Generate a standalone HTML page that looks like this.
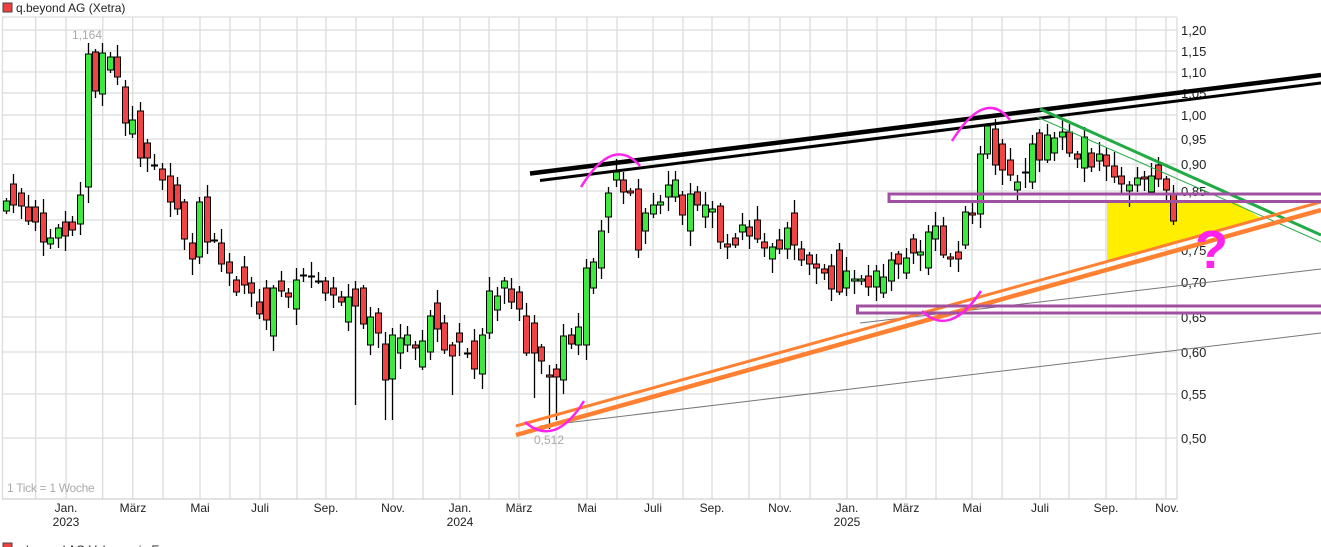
<!DOCTYPE html>
<html><head><meta charset="utf-8"><style>
html,body{margin:0;padding:0;background:#fff;width:1321px;height:547px;overflow:hidden}
svg{display:block}
text{font-family:"Liberation Sans",sans-serif}
</style></head><body>
<svg id="s" width="1321" height="547" viewBox="0 0 1321 547" xmlns="http://www.w3.org/2000/svg">
<rect x="0" y="0" width="1321" height="547" fill="#fff"/>
<g id="grid" stroke="#dcdcdc" stroke-width="1.3"></g>
<line x1="2" y1="499" x2="1177" y2="499" stroke="#d0d0d0" stroke-width="1.3"/>
<rect x="3" y="3" width="9" height="9" fill="#f04040" stroke="#444" stroke-width="1"/>
<text x="16" y="12" font-size="12" fill="#222">q.beyond AG (Xetra)</text>
<text x="72" y="39" font-size="12" fill="#aaa">1,164</text>
<text x="534" y="444" font-size="12" fill="#aaa">0,512</text>
<text x="7" y="492" font-size="12" fill="#aaa" letter-spacing="-0.3">1 Tick = 1 Woche</text>
<g id="labels" font-size="12" fill="#222" text-anchor="middle"></g>
<g id="ylab" font-size="13" fill="#222"></g>
<polygon points="1107,203 1237,203 1262,219 1107,262" fill="#ffee00"/>
<g id="candles"></g>
<line x1="540" y1="426" x2="1321" y2="333" stroke="#777" stroke-width="1"/>
<line x1="860" y1="323" x2="1321" y2="269" stroke="#777" stroke-width="1"/>
<line x1="530" y1="173.5" x2="1321" y2="75" stroke="#000" stroke-width="4.5"/>
<line x1="540" y1="180.5" x2="1321" y2="83" stroke="#000" stroke-width="3"/>
<line x1="1040" y1="109" x2="1321" y2="235" stroke="#22aa44" stroke-width="3"/>
<line x1="1037" y1="117" x2="1321" y2="242" stroke="#22aa44" stroke-width="1"/>
<line x1="516" y1="426" x2="1321" y2="202" stroke="#ff8030" stroke-width="3"/>
<line x1="516" y1="435" x2="1321" y2="210" stroke="#ff8030" stroke-width="4.5"/>
<rect x="889" y="194" width="440" height="7.5" fill="none" stroke="#a050a0" stroke-width="3"/>
<rect x="857.5" y="306" width="470" height="7" fill="none" stroke="#a050a0" stroke-width="3"/>
<g fill="none" stroke="#ff22ee" stroke-width="2.5">
<path d="M581,187 Q613,135 640,166"/>
<path d="M952,141 Q985,88 1010,120"/>
<path d="M922,311 Q950,338 981,291"/>
<path d="M525,422 Q555,448 584,401"/>
</g>
<text x="1195" y="268" font-size="54" font-weight="bold" fill="#ff22ee">?</text>
<rect x="3" y="543" width="9" height="9" fill="#f04040" stroke="#444" stroke-width="1"/>
<text x="16" y="554" font-size="12" fill="#222">q.beyond AG Volumen in Euro</text>
</svg>
<script>
var NS="http://www.w3.org/2000/svg";
function el(p,t,a,txt){var e=document.createElementNS(NS,t);for(var k in a)e.setAttribute(k,a[k]);if(txt)e.textContent=txt;p.appendChild(e);return e;}
var g=document.getElementById('grid');
var hy=[17,30,51,72,93,115,139,164,191,220,250,282,317,352,394,438];
hy.forEach(function(y){el(g,'line',{x1:2,y1:y,x2:1177,y2:y});});
var vx=[2.5,35.7,66,102.7,132.7,163,200,230,260,297,326,356,393,423,460,489,519,556,587,617,653,683,712,749,780,810,847,877,906,936,972,1002,1040,1069,1106,1136,1166,1177];
vx.forEach(function(x){el(g,'line',{x1:x,y1:17,x2:x,y2:499});});
var lab=document.getElementById('labels');
[[66,'Jan.','2023'],[133,'März'],[200,'Mai'],[260,'Juli'],[326,'Sep.'],[393,'Nov.'],[460,'Jan.','2024'],[519,'März'],[587,'Mai'],[653,'Juli'],[712,'Sep.'],[780,'Nov.'],[847,'Jan.','2025'],[906,'März'],[972,'Mai'],[1040,'Juli'],[1106,'Sep.'],[1167,'Nov.']].forEach(function(l){
el(lab,'text',{x:l[0],y:512},l[1]);if(l[2])el(lab,'text',{x:l[0],y:526},l[2]);});
var yl=document.getElementById('ylab');
[['1,20',30],['1,15',51],['1,10',72],['1,05',93],['1,00',115],['0,95',139],['0,90',164],['0,85',191],['0,80',220],['0,75',250],['0,70',282],['0,65',317],['0,60',352],['0,55',394],['0,50',438]].forEach(function(a){el(yl,'text',{x:1181,y:a[1]+5},a[0]);});
var d=[[6,211,201],[13,184,205],[21,193,206],[28,207,221],[35,207,222],[43,213,242],[50,244,238],[58,238,228],[65,222,236],[72,222,230],[80,224,195],[88,187,54],[95,52,91],[102,94,53],[110,70,57],[117,57,77],[125,87,123],[132,134,120],[140,111,158],[147,143,158],[154,165,165],[162,169,180],[170,176,202],[177,185,209],[184,202,239],[192,243,259],[199,257,202],[207,197,242],[214,240,240],[221,243,264],[229,262,273],[236,280,292],[244,267,285],[251,283,293],[259,302,314],[266,288,320],[273,336,288],[281,281,291],[288,293,297],[296,309,280],[303,275,275],[311,276,276],[318,281,281],[325,281,293],[333,288,295],[341,297,302],[348,322,297],[355,289,306],[363,288,324],[370,345,317],[378,313,333],[385,344,380],[392,379,335],[400,353,338],[407,345,335],[415,345,348],[422,367,341],[430,352,316],[437,303,329],[444,323,350],[452,345,356],[459,333,342],[467,353,353],[474,341,369],[482,374,335],[489,333,291],[497,310,296],[504,288,281],[511,289,302],[519,292,309],[526,316,353],[534,323,353],[541,347,361],[549,375,377],[556,369,377],[563,380,336],[571,335,344],[578,345,327],[586,345,268],[593,288,262],[601,268,231],[608,217,193],[616,180,172],[623,180,192],[630,191,193],[638,189,250],[645,231,213],[653,214,205],[660,205,202],[668,197,185],[675,197,180],[682,195,215],[690,231,194],[697,192,205],[705,217,205],[712,212,209],[720,206,242],[727,244,247],[735,238,245],[742,232,225],[749,227,236],[757,220,239],[764,242,248],[772,259,247],[779,240,249],[787,249,228],[794,213,245],[801,249,260],[809,255,264],[816,264,268],[824,269,273],[831,266,289],[839,250,292],[846,288,271],[854,281,279],[861,281,279],[868,276,287],[876,287,271],[883,293,277],[891,281,260],[898,254,264],[906,273,258],[913,239,253],[920,255,252],[928,268,232],[935,239,226],[943,226,255],[950,257,259],[958,252,259],[965,245,212],[972,213,215],[980,214,154],[987,154,126],[995,129,165],[1002,144,170],[1010,160,175],[1017,190,182],[1025,172,172],[1032,182,144],[1039,133,160],[1047,160,135],[1054,153,138],[1062,137,132],[1069,132,153],[1077,154,159],[1084,168,137],[1091,153,167],[1099,161,154],[1106,155,166],[1114,166,177],[1121,176,184],[1129,191,185],[1137,185,178],[1144,177,179],[1151,192,176],[1158,165,179],[1166,179,190],[1173,195,221]];
var ovH={88:43},ovL={549:429,385:420,392:420,355:405,556:420,534:398,452:395};
var c=document.getElementById('candles');
d.forEach(function(a,i){
var x=a[0],o=a[1],cl=a[2],t=Math.min(o,cl),b=Math.max(o,cl);
var h=ovH[x]||t-(3+(i*7)%12),l=ovL[x]||b+(3+(i*5)%14);
el(c,'line',{x1:x+0.5,y1:h,x2:x+0.5,y2:l,stroke:'#000','stroke-width':1.3});
if(b-t<2){el(c,'line',{x1:x-3,y1:t+0.5,x2:x+4,y2:t+0.5,stroke:'#000','stroke-width':2});}
else el(c,'rect',{x:x-2.5,y:t,width:6,height:b-t,fill:cl<o?'#3ee83e':'#f04444',stroke:'#000','stroke-width':1});
});
</script>
</body></html>
